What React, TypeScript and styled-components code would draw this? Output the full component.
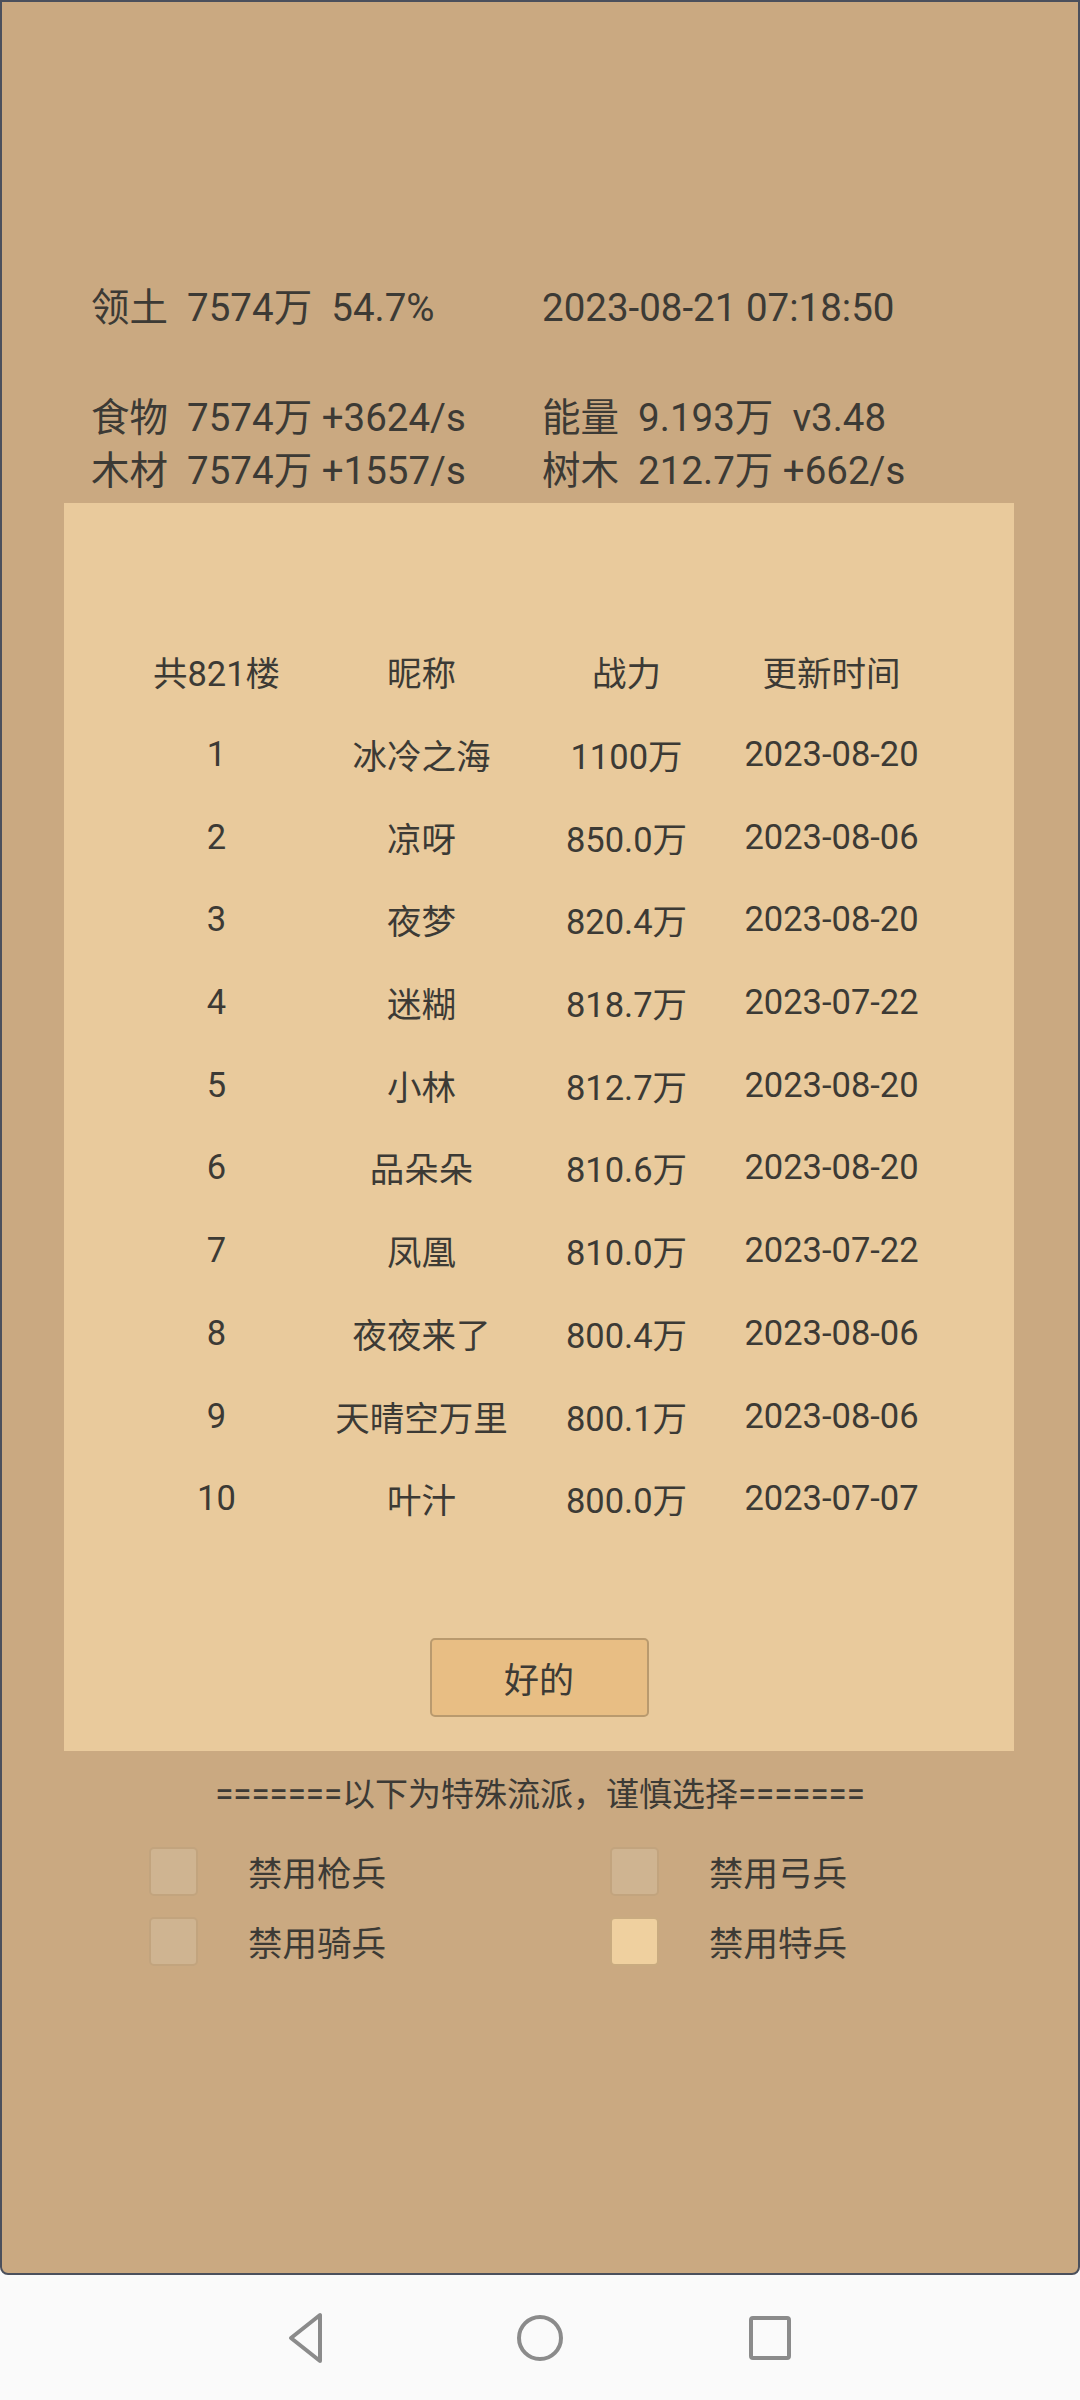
import React from 'react';
import styled, {createGlobalStyle} from 'styled-components';

const GlobalStyle = createGlobalStyle`
  html, body {
    margin: 0;
    padding: 0;
    background: #fafafa;
  }
  * { box-sizing: border-box; }
`;

const font = `Roboto, "Noto Sans CJK SC", sans-serif`;
const ink = '#3c3a35';

const infoRows = [
    [['领土  7574万  54.7%'], ['2023-08-21 07:18:50']],
    [['食物  7574万 +3624/s'], ['能量  9.193万  v3.48']],
    [['木材  7574万 +1557/s'], ['树木  212.7万 +662/s']],
];

const ranking = [
    ['1', '冰冷之海', '1100万', '2023-08-20'],
    ['2', '凉呀', '850.0万', '2023-08-06'],
    ['3', '夜梦', '820.4万', '2023-08-20'],
    ['4', '迷糊', '818.7万', '2023-07-22'],
    ['5', '小林', '812.7万', '2023-08-20'],
    ['6', '品朵朵', '810.6万', '2023-08-20'],
    ['7', '凤凰', '810.0万', '2023-07-22'],
    ['8', '夜夜来了', '800.4万', '2023-08-06'],
    ['9', '天晴空万里', '800.1万', '2023-08-06'],
    ['10', '叶汁', '800.0万', '2023-07-07'],
];

const options = [
    {label: '禁用枪兵', checked: false},
    {label: '禁用弓兵', checked: false},
    {label: '禁用骑兵', checked: false},
    {label: '禁用特兵', checked: true},
];

const App = () => {
    return <Screen>
        <GlobalStyle/>
        <GameArea>
            <InfoGrid>
                {infoRows.map((row, k) =>
                    <React.Fragment key={k}>
                        <InfoCell $first={k === 0}>{row[0]}</InfoCell>
                        <InfoCell $first={k === 0}>{row[1]}</InfoCell>
                    </React.Fragment>
                )}
            </InfoGrid>
            <Dialog>
                <RankTable>
                    <Cell>共821楼</Cell>
                    <Cell>昵称</Cell>
                    <Cell>战力</Cell>
                    <Cell>更新时间</Cell>
                    {ranking.map((r, k) => r.map((c, j) => <Cell key={k + '-' + j}>{c}</Cell>))}
                </RankTable>
                <OkButton>好的</OkButton>
            </Dialog>
            <Warning>=======以下为特殊流派，谨慎选择=======</Warning>
            <OptionGrid>
                {options.map((o, k) =>
                    <Option key={k}>
                        <CheckBox $checked={o.checked}/>
                        <OptionLabel>{o.label}</OptionLabel>
                    </Option>
                )}
            </OptionGrid>
        </GameArea>
        <NavBar>
            <NavIcon width="52" height="52" viewBox="0 0 52 52">
                <path d="M36 3 L36 49 L7 26 Z" fill="none" stroke="#8b8b8b" strokeWidth="4" strokeLinejoin="round"/>
            </NavIcon>
            <NavIcon width="52" height="52" viewBox="0 0 52 52">
                <circle cx="26" cy="26" r="21" fill="none" stroke="#8b8b8b" strokeWidth="4"/>
            </NavIcon>
            <NavIcon width="52" height="52" viewBox="0 0 52 52">
                <rect x="7" y="6" width="38" height="40" rx="2" fill="none" stroke="#8b8b8b" strokeWidth="4"/>
            </NavIcon>
        </NavBar>
    </Screen>
};

const Screen = styled.div`
  width: 1080px;
  height: 2400px;
  display: flex;
  flex-direction: column;
  font-family: ${font};
  color: ${ink};
`;

const GameArea = styled.div`
  height: 2275px;
  background: #caa981;
  border: 2px solid #4b505c;
  border-radius: 0 0 8px 8px;
  display: flex;
  flex-direction: column;
  padding-top: 279px;
`;

const InfoGrid = styled.div`
  display: grid;
  grid-template-columns: 451px 1fr;
  padding-left: 89px;
`;

const InfoCell = styled.div`
  font-size: 38.5px;
  line-height: 53px;
  white-space: pre;
  margin-bottom: ${p => p.$first ? '57px' : '0'};
`;

const Dialog = styled.div`
  margin: 6px 0 0 62px;
  width: 950px;
  height: 1248px;
  background: #e9ca9c;
  display: flex;
  flex-direction: column;
  align-items: center;
  padding-top: 127px;
`;

const RankTable = styled.div`
  display: grid;
  grid-template-columns: repeat(4, 205px);
  grid-auto-rows: 82.7px;
  margin-left: -30px;
`;

const Cell = styled.div`
  font-size: 34.5px;
  display: flex;
  align-items: center;
  justify-content: center;
  white-space: nowrap;
`;

const OkButton = styled.div`
  margin-top: 98px;
  width: 219px;
  height: 79px;
  background: #e8be84;
  border: 2px solid #b99a6e;
  border-radius: 5px;
  font-size: 35px;
  display: flex;
  align-items: center;
  justify-content: center;
`;

const Warning = styled.div`
  margin-top: 19px;
  font-size: 33px;
  line-height: 50px;
  text-align: center;
  white-space: nowrap;
`;

const OptionGrid = styled.div`
  margin-top: 16px;
  display: grid;
  grid-template-columns: 461px 1fr;
  grid-auto-rows: 70px;
  padding-left: 147px;
`;

const Option = styled.div`
  display: flex;
  align-items: center;
`;

const CheckBox = styled.div`
  width: 49px;
  height: 49px;
  border-radius: 5px;
  border: 2px solid ${p => p.$checked ? '#c9ab80' : '#c2a47e'};
  background: ${p => p.$checked ? '#efd09f' : '#cfb491'};
`;

const OptionLabel = styled.div`
  margin-left: 50px;
  font-size: 34.5px;
`;

const NavBar = styled.div`
  flex: 1;
  background: #fafafa;
  display: flex;
  align-items: center;
  justify-content: center;
  gap: 178px;
`;

const NavIcon = styled.svg`
  display: block;
`;

export default App;
